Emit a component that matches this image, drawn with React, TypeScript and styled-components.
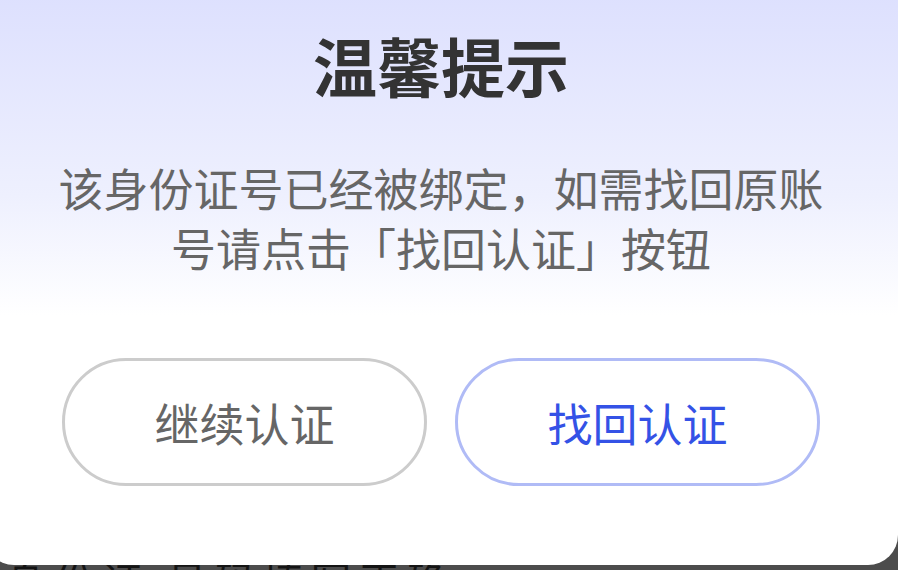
import React from 'react';
import styled, { createGlobalStyle } from 'styled-components';

const GlobalStyle = createGlobalStyle`
    html, body {
        margin: 0;
        padding: 0;
        height: 100%;
        background-color: #4c4c4c;
        overflow: hidden;
    }

    body {
        font-family: "Noto Sans CJK SC", "Noto Sans", sans-serif;
    }

    #root {
        height: 100%;
    }
`;

const Page = styled.div`
    display: flex;
    flex-direction: column;
    height: 570px;
    overflow: hidden;
`;

const Dialog = styled.div`
    flex: none;
    display: flex;
    flex-direction: column;
    align-items: center;
    width: 914px;
    box-sizing: border-box;
    margin: -30px 0 0 -16px;
    padding: 49px 78px 79px;
    border-radius: 30px;
    background: linear-gradient(180deg, #dbdefe 0%, #eef0fe 38%, #ffffff 58%, #ffffff 100%);
    position: relative;
    z-index: 1;
`;

const Title = styled.h2`
    margin: 0;
    font-size: 64px;
    line-height: 90px;
    font-weight: 600;
    color: #333333;
`;

const Message = styled.p`
    margin: 49px 0 0;
    width: 772px;
    font-size: 45px;
    line-height: 60px;
    color: #666666;
    text-align: center;
`;

const ButtonRow = styled.div`
    display: flex;
    gap: 28px;
    margin-top: 80px;
    width: 100%;
`;

const ActionButton = styled.button<{ $primary?: boolean }>`
    flex: 1;
    height: 128px;
    box-sizing: border-box;
    border-radius: 64px;
    border: 3px solid ${(p) => (p.$primary ? '#b0bbf6' : '#cccccc')};
    background: #ffffff;
    color: ${(p) => (p.$primary ? '#3452e6' : '#666666')};
    font-family: inherit;
    font-size: 45px;
    cursor: pointer;
`;

const Backdrop = styled.div`
    flex: 1;
    overflow: hidden;
    padding-left: 6px;
`;

const BehindText = styled.div`
    margin-top: -6px;
    font-size: 40px;
    line-height: 1;
    letter-spacing: 8px;
    color: #141414;
    white-space: nowrap;
`;

const App: React.FunctionComponent = () => {
    return (
        <>
            <GlobalStyle />
            <Page>
                <Dialog>
                    <Title>温馨提示</Title>
                    <Message>该身份证号已经被绑定，如需找回原账号请点击「找回认证」按钮</Message>
                    <ButtonRow>
                        <ActionButton>继续认证</ActionButton>
                        <ActionButton $primary>找回认证</ActionButton>
                    </ButtonRow>
                </Dialog>
                <Backdrop>
                    <BehindText>身份证 号码填写正确</BehindText>
                </Backdrop>
            </Page>
        </>
    );
}
export default App;
